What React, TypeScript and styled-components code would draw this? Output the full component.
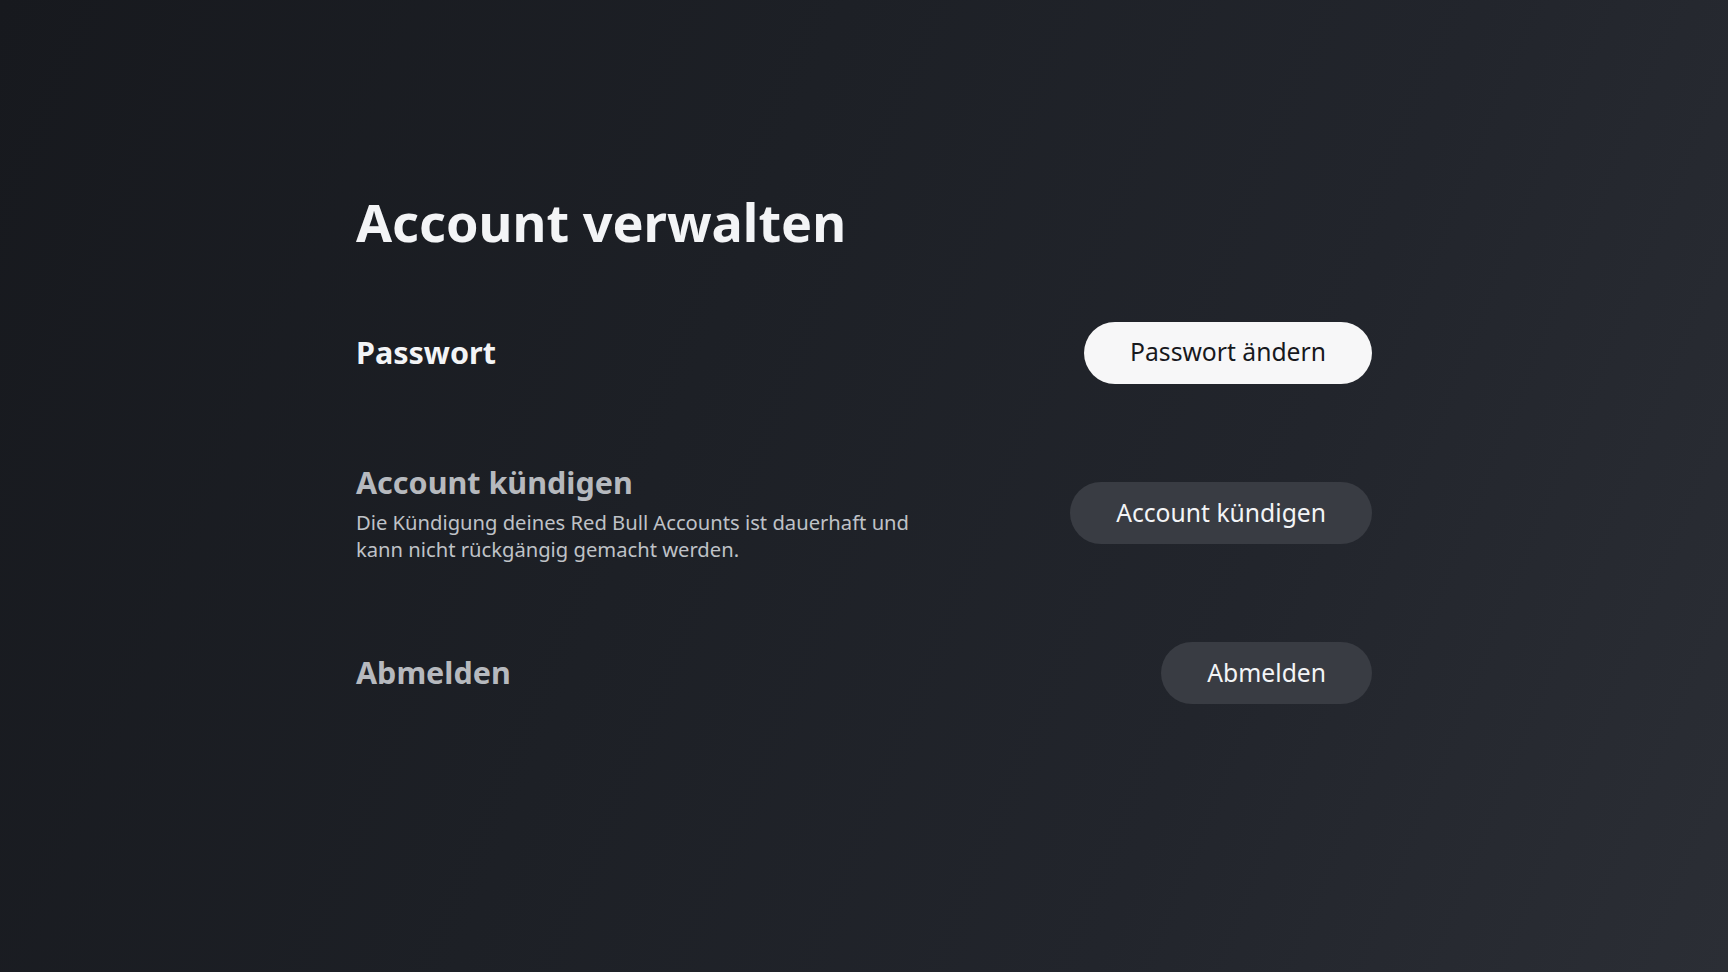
import React from 'react'
import styled, { createGlobalStyle } from 'styled-components'

const GlobalStyle = createGlobalStyle`
  html, body {
    margin: 0;
    padding: 0;
  }

  body {
    font-family: "Noto Sans", "Open Sans", sans-serif;
    background: #1d1f25;
  }
`

const StyledPage = styled.div`
  box-sizing: border-box;
  width: 100vw;
  height: 100vh;
  padding: 191px 0 0 356px;
  overflow: hidden;

  background: linear-gradient(112deg, #17191e 0%, #1d2026 40%, #22252c 70%, #2b2e35 100%);
`

const StyledContent = styled.div`
  width: 1016px;
`

const StyledTitle = styled.h1`
  margin: 0 0 68px 0;

  font-size: 52.2px;
  font-weight: 700;
  line-height: 1.2;
  color: #f3f4f6;
`

const StyledList = styled.div`
  display: flex;
  flex-direction: column;
  gap: 79px;
`

const StyledRow = styled.div`
  display: flex;
  align-items: center;
  justify-content: space-between;
  min-height: 62px;
`

const StyledTextBlock = styled.div`
  display: flex;
  flex-direction: column;
  gap: 7px;
`

const StyledHeading = styled.h2<{ $active?: boolean }>`
  margin: 0;

  font-size: 30.5px;
  font-weight: 700;
  line-height: 1.3;
  color: ${(props) => (props.$active ? '#f3f4f6' : '#b6b9be')};
`

const StyledDescription = styled.p`
  margin: 0;
  max-width: 580px;

  font-size: 20.2px;
  line-height: 27px;
  color: #bfc2c7;
`

const StyledButton = styled.button<{ $primary?: boolean }>`
  flex-shrink: 0;
  height: 62px;
  padding: 0 46px;

  font-family: inherit;
  font-size: 24.7px;
  line-height: 1;
  color: ${(props) => (props.$primary ? '#17191d' : '#f3f4f6')};

  background: ${(props) => (props.$primary ? '#f7f7f8' : '#393c43')};
  border: none;
  border-radius: 31px;
  cursor: pointer;
`

const rows = [
  { title: 'Passwort', action: 'Passwort ändern', primary: true },
  {
    title: 'Account kündigen',
    text: 'Die Kündigung deines Red Bull Accounts ist dauerhaft und kann nicht rückgängig gemacht werden.',
    action: 'Account kündigen',
  },
  { title: 'Abmelden', action: 'Abmelden' },
]

const App: React.FC = () => {
  return (
    <>
      <GlobalStyle />
      <StyledPage>
        <StyledContent>
          <StyledTitle>Account verwalten</StyledTitle>
          <StyledList>
            {rows.map((row) => (
              <StyledRow key={row.title}>
                <StyledTextBlock>
                  <StyledHeading $active={row.primary}>{row.title}</StyledHeading>
                  {row.text && <StyledDescription>{row.text}</StyledDescription>}
                </StyledTextBlock>
                <StyledButton $primary={row.primary}>{row.action}</StyledButton>
              </StyledRow>
            ))}
          </StyledList>
        </StyledContent>
      </StyledPage>
    </>
  )
}

export default App
